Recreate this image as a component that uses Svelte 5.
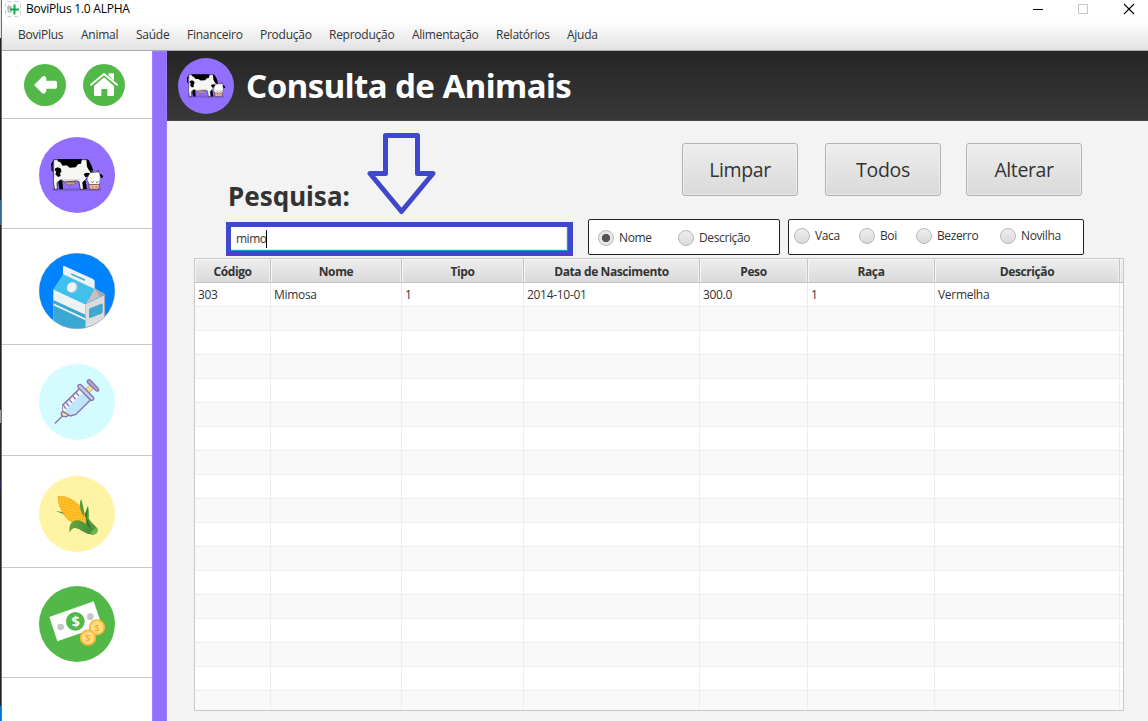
<script>
  const menus = ['BoviPlus', 'Animal', 'Saúde', 'Financeiro', 'Produção', 'Reprodução', 'Alimentação', 'Relatórios', 'Ajuda'];
  const columns = ['Código', 'Nome', 'Tipo', 'Data de Nascimento', 'Peso', 'Raça', 'Descrição', ''];
  const record = ['303', 'Mimosa', '1', '2014-10-01', '300.0', '1', 'Vermelha', ''];
  const rows = [record, ...Array.from({ length: 17 }, () => columns.map(() => ''))];
  let query = $state('mimo');
  let field = $state('Nome');
  let kind = $state('');
</script>

{#snippet cow()}
  <svg viewBox="117 51 228 228">
    <circle cx="231" cy="165" r="114" fill="#926fff" />
    <path d="M156 204H303V213H156z" fill="#7d5fd8" />
    <path d="M174 180L187 178L189 208H178zM246 178L257 182L261 208H250z" fill="#000" />
    <path d="M161 119H262L272 136L276 154L264 168L256 180L248 187L250 208H241L237 185L228 182L194 186L182 179L171 188L172 208H164L160 185L161 160z" fill="#f6f6f4" stroke="#111" stroke-width="2" />
    <path d="M184 178L196 183L230 181L239 176L226 178z" fill="#d5d3cc" />
    <path d="M173 117H246L243 131L234 133L227 142L209 143L200 136L188 137L181 127L173 124zM166 145L174 142L183 146L184 156L180 160L182 168L174 171L166 163L169 155L164 151z" fill="#000" />
    <path d="M161 119L153 132L155 152L159 156L158 138z" fill="#000" />
    <path d="M259 118L266 120L275 137L280 152L274 160L266 149L261 140zM251 162L260 158L272 160L267 168L256 172zM298 160L307 165L310 172L302 175z" fill="#000" />
    <path d="M194 186H227L224 193L220 197L217 193L212 194L210 199L206 193L201 195L198 190z" fill="#c99b87" stroke="#614a40" stroke-width="1.500" />
    <path d="M270 158L298 156L301 173L298 195H269L261 177z" fill="#fffffb" stroke="#555" stroke-width="1.500" />
    <path d="M266 194L299 193L296 208H269z" fill="#f2b59e" stroke="#4d302a" stroke-width="2" />
    <path d="M272 157l4-7 4 7M289 156l6-6 1 7M273 184l4 4 4-4M287 184l4 4 4-4" fill="none" stroke="#4a3a35" stroke-width="2.500" />
    <path d="M277 201h3M287 201h3" stroke="#5b2b28" stroke-width="3" />
  </svg>
{/snippet}

<div class="window">
  <div class="edge"></div>
  <div class="frame">
    <header class="title">
      <svg class="logo" viewBox="0 0 16 16">
        <rect x=".5" y=".5" width="15" height="15" rx="2" fill="#fff" stroke="#ccc" stroke-dasharray="4 3" />
        <path d="M3 5h3v6H3zM2 7h4" fill="#ddd" stroke="#aaa" />
        <path d="M9.500 3.500v10M5 8.500h9" stroke="#16a84b" stroke-width="2" />
      </svg>
      <span>BoviPlus 1.0 ALPHA</span>
      <svg class="controls" viewBox="0 0 120 23">
        <path d="M5 9.500h10" stroke="#000" />
        <rect x="50.500" y="4.500" width="9" height="9" fill="none" stroke="#c8c8c8" />
        <path d="M96 4l10 10M106 4L96 14" stroke="#000" stroke-width="1.1" />
      </svg>
    </header>
    <nav class="menubar">
      {#each menus as menu}<span>{menu}</span>{/each}
    </nav>
    <div class="body">
      <aside>
        <div class="slot nav">
          <svg viewBox="72 192 126 126">
            <circle cx="135" cy="255" r="63" fill="#52b848" />
            <path d="M102 255l25-25q4-4 8-1l3 3q1 2 1 10h27q5 0 5 5v14q0 5-5 5h-27q0 9-2 11l-3 3q-4 3-8-1z" fill="#fff" />
          </svg>
          <svg viewBox="249 192 126 126">
            <circle cx="312" cy="255" r="63" fill="#52b848" />
            <path d="M326 225v-5h16v20zM282 258l30-26 30 26v26q0 4-4 4h-16v-21h-18v21h-17q-5 0-5-4z" fill="#fff" />
            <path d="M274 254l38-33 38 33" fill="none" stroke="#52b848" stroke-width="10" />
            <path d="M273 254l39-32 39 32" fill="none" stroke="#fff" stroke-width="6" stroke-linecap="round" stroke-linejoin="round" />
            <path d="M326 226v-4h16v21z" fill="#fff" />
          </svg>
        </div>
        <div class="slot">{@render cow()}</div>
        <div class="slot">
          <svg viewBox="117 54 228 228">
            <defs><clipPath id="disc"><circle cx="231" cy="168" r="113" /></clipPath></defs>
            <circle cx="231" cy="168" r="113.500" fill="#0083ff" stroke="#687887" stroke-width="1" />
            <g clip-path="url(#disc)">
              <path d="M160 163l96 45v80h-96z" fill="#edf2f4" />
              <path d="M256 208l59-29v70l-59 40z" fill="#dcdcde" />
              <path d="M284 160l31 18-59 30z" fill="#c5c1c3" />
              <path d="M284 160l31 18-15 7z" fill="#aaa5a8" />
              <path d="M189 118l95 43-28 47-96-45z" fill="#40c0eb" />
              <path d="M189 96q0-4 4-3l86 39q5 3 5 8v22l-95-44z" fill="#edf2f4" />
              <path d="M214 115l41 18v5l-41-18z" fill="#42abd0" />
              <path d="M160 195l96 44v11l-96-45zM160 211l96 45v35h-96z" fill="#39a9d3" />
              <path d="M267 226q0-5 4-7l33-13q4-1 4 3v20q0 5-4 7l-33 13q-4 1-4-3z" fill="#42a9cd" />
              <path d="M314 180v80" stroke="#888" stroke-width="2" />
              <ellipse cx="218" cy="157" rx="14" ry="16" fill="#c7d4db" transform="rotate(28 218 157)" />
              <ellipse cx="214" cy="157" rx="13" ry="15" fill="#f1f3f4" transform="rotate(28 214 157)" />
            </g>
          </svg>
        </div>
        <div class="slot">
          <svg viewBox="117 42 228 228">
            <circle cx="231" cy="156" r="114" fill="#d4fcff" />
            <g stroke="#8b72ab" stroke-width="4" stroke-linecap="round" stroke-linejoin="round">
              <path d="M166 219l22-22" />
              <path d="M184 189l9-8 13 13-6 6-11-1-5-5z" fill="#ffdc83" />
              <path d="M239 116l33 33-44 44-17 5-22-13-1-19z" fill="#c0e4fa" />
              <path d="M239 116l11 11-55 57-6-3-1-16z" fill="#edf7ff" stroke="none" />
              <path d="M239 116L188 166" />
              <path d="M258 117l11-12 11 11-12 12z" fill="#ffdc83" stroke="#c5a680" stroke-width="3" />
              <path d="M235 105q5-4 9 0l35 36q5 6 0 9-4 3-8-1l-36-36q-3-4 0-8z" fill="#bcd0eb" />
              <path d="M263 91q4-4 8 0l23 24q4 5 1 7-4 3-8-1l-24-23q-3-3 0-7z" fill="#afaad0" />
              <path d="M229 126l1 5 6 6M219 136l1 5 6 6M209 147l1 5 6 6M200 157l1 5 6 6M192 167l1 4 5 5" fill="none" stroke-width="3.500" />
            </g>
          </svg>
        </div>
        <div class="slot">
          <svg viewBox="117 33 228 228">
            <defs>
              <pattern id="grain" width="8" height="8" patternUnits="userSpaceOnUse" patternTransform="rotate(12)">
                <rect width="8" height="8" fill="#ffc928" /><circle cx="4" cy="4" r="2.600" fill="#f6a11c" />
              </pattern>
              <linearGradient id="leaf"><stop stop-color="#66a641" /><stop offset="1" stop-color="#3f8935" /></linearGradient>
            </defs>
            <circle cx="231" cy="147" r="114" fill="#fff4a4" />
            <path d="M168 139q19-1 31 8t20 23l-11-7q-12-16-40-24z" fill="#4a9139" />
            <path d="M243 103q4 20 8 40l5 36-15-25q-5-29 2-51z" fill="#64a442" />
            <path d="M174 94q20-3 42 10 27 15 39 43l4 30-32-1q-27-7-42-39-12-23-11-43z" fill="url(#grain)" stroke="#eca72d" stroke-width="2" />
            <path d="M243 103q-7 24 2 40l8 14q0-30-10-54z" fill="#559b3d" />
            <path d="M264 122q4 20 2 38 3 6 10 13 8 7 17 18l-2 12-14 7-9-6q-8-9-9-20 1-23-5-36z" fill="#559b3d" />
            <path d="M264 124l-4 34 18 42q-17-9-19-23 2-16-4-27z" fill="#2f7731" />
            <path d="M209 203q-4-25 11-34 16-7 30 3 13 9 20 16l17 8-11 12q-16 0-29-9-9-8-21-10-10-1-17 14z" fill="url(#leaf)" />
            <path d="M271 203l16-15 7 5-3 12-11 5z" fill="#72b64c" />
          </svg>
        </div>
        <div class="slot">
          <svg viewBox="117 33 228 228">
            <circle cx="231" cy="147" r="114" fill="#52b848" />
            <path d="M148 126L281 79L306 152L172 199z" fill="#fff" />
            <circle cx="226" cy="139" r="28" fill="#52b848" />
            <circle cx="182" cy="156" r="10" fill="#c5c5c5" /><circle cx="271" cy="125" r="10" fill="#c5c5c5" />
            <g font-family="Open Sans, sans-serif" text-anchor="middle" font-weight="700">
              <text x="227" y="155" font-size="43" fill="#fff" transform="rotate(-5 227 139)">$</text>
              <circle cx="291" cy="157" r="22" fill="#ffdb83" stroke="#fbb62d" stroke-width="5" />
              <text x="291" y="167" font-size="27" fill="#f3aa27">S</text>
              <circle cx="264" cy="188" r="22" fill="#ffdb83" stroke="#fbb62d" stroke-width="5" />
              <text x="264" y="198" font-size="27" fill="#f3aa27">S</text>
            </g>
          </svg>
        </div>
      </aside>
      <div class="stripe"></div>
      <main>
        <div class="banner">
          {@render cow()}
          <h1>Consulta de Animais</h1>
        </div>
        <div class="tools">
          <div class="search">
            <h2>Pesquisa:</h2>
            <label class="query"><span>{query}</span><i></i></label>
            <svg class="arrow" viewBox="0 0 70 84">
              <path d="M19.500 4.500h32v38h15.500L35.500 80.500 4 42.500h15.500z" fill="none" stroke="#3f48cc" stroke-width="5" stroke-linejoin="round" />
            </svg>
          </div>
          <div class="actions">
            <div class="buttons">
              <button onclick={() => (query = '')}>Limpar</button>
              <button>Todos</button>
              <button>Alterar</button>
            </div>
            <div class="filters">
              <div class="group fields">
                {#each ['Nome', 'Descrição'] as name}
                  <button class="radio" onclick={() => (field = name)}><i class:on={field === name}></i><span>{name}</span></button>
                {/each}
              </div>
              <div class="group kinds">
                {#each ['Vaca', 'Boi', 'Bezerro', 'Novilha'] as name}
                  <button class="radio" onclick={() => (kind = name)}><i class:on={kind === name}></i><span>{name}</span></button>
                {/each}
              </div>
            </div>
          </div>
        </div>
        <div class="table">
          <div class="row head">
            {#each columns as column}<b>{column}</b>{/each}
          </div>
          {#each rows as row}
            <div class="row">{#each row as cell}<span>{cell}</span>{/each}</div>
          {/each}
        </div>
      </main>
    </div>
  </div>
</div>

<style>
  :global(body) { margin: 0; overflow: hidden; }
  * { box-sizing: border-box; }
  svg { display: block; flex: none; }
  .window { display: flex; width: 1148px; height: 721px; font: 12px/16px "Open Sans", "Noto Sans", sans-serif; color: #333; background: #fff; overflow: hidden; }
  .edge { width: 2px; border-right: 1px solid #1883d7; background: linear-gradient(#e4e4e4 0 38px, #222 38px 200px, #376d91 200px 225px, #222 225px 410px, #999 410px 423px, #222 423px 480px, #225 480px 490px, #222 490px 706px, #0078d7 706px); }
  .frame { flex: 1; min-width: 0; display: flex; flex-direction: column; }
  .title { display: flex; height: 23px; padding: 1px 0 0 3px; color: #000; letter-spacing: -.24px; }
  .title span { margin: 0 auto 0 5px; white-space: nowrap; }
  .logo { width: 16px; height: 16px; }
  .controls { width: 120px; height: 23px; margin-top: -1px; }
  .menubar { display: grid; grid-template-columns: 63px 55px 51px 73px 69px 83px 84px 71px 60px; height: 28px; padding: 4px 0 0 16px; border-bottom: 1px solid #aaa; background: linear-gradient(#fdfdfd, #e2e2e2); letter-spacing: -.26px; white-space: nowrap; }
  .body { display: flex; flex: 1; min-height: 0; }
  aside { width: 150px; }
  .slot { display: flex; justify-content: center; align-items: center; height: 112px; border-bottom: 1px solid #c8c8c8; }
  .slot svg { width: 76px; height: 76px; }
  .slot.nav { height: 68px; gap: 17px; padding-right: 5px; }
  .slot.nav svg { width: 42px; height: 42px; }
  .slot:nth-child(2) { height: 110px; padding-top: 2px; }
  .slot:nth-child(3) { height: 116px; padding-top: 8px; }
  .slot:nth-child(4) { height: 111px; padding-top: 4px; }
  .slot:nth-child(5) { padding-top: 4px; }
  .slot:nth-child(6) { height: 110px; padding-top: 2px; }
  .stripe { width: 15px; border: solid #9c7cff; border-width: 1px 1px 0; border-radius: 1px 1px 0 0; background: #926fff; }
  main { flex: 1; min-width: 0; background: #f3f3f3; }
  .banner { display: flex; align-items: center; height: 70px; padding-left: 11px; border-bottom: 1px solid #484848; background: linear-gradient(#252525, #383838); }
  .banner svg { width: 56px; height: 56px; }
  h1 { margin: 0 0 0 12px; font: 700 33px/50px "Noto Sans", sans-serif; letter-spacing: -.53px; color: #fff; white-space: nowrap; }
  .tools { display: flex; height: 137px; padding-left: 59px; }
  .search { position: relative; width: 347px; padding-top: 55px; }
  h2 { margin: 0 0 0 2px; height: 46px; font: 700 26px/40px "Noto Sans", sans-serif; }
  .query { display: flex; align-items: center; height: 34px; border: 5px solid #3f48cc; padding: 0 0 1px 5px; background: #fff; box-shadow: inset -1px -1px #00a2cf, inset -2px -2px #dceff7; letter-spacing: -.5px; }
  .query i { width: 1px; height: 18px; background: #000; }
  .arrow { position: absolute; left: 140px; top: 10px; width: 70px; height: 84px; }
  .actions { margin-left: 15px; width: 496px; padding-top: 22px; }
  .buttons { display: grid; grid-template-columns: 116px 116px 116px; column-gap: 27px; padding-left: 94px; height: 76px; }
  .buttons button:last-child { margin-left: -2px; margin-right: 2px; }
  button { font: inherit; color: inherit; padding: 0; }
  .buttons button { height: 53px; padding-top: 1px; border: 1px solid #b2b2b2; border-radius: 3px; background: linear-gradient(#eee, #d9d9d9); box-shadow: inset 0 0 0 1px #f4f4f499; font-size: 19.500px; letter-spacing: -.4px; }
  .buttons button:nth-child(2) { letter-spacing: -.25px; }
  .filters { display: flex; gap: 8px; }
  .group { display: grid; height: 36px; border: 1px solid #222; border-radius: 2px; background: #fff; align-items: center; }
  .fields { width: 192px; grid-template-columns: 80px 1fr; padding: 1px 0 0 9px; }
  .kinds { width: 296px; grid-template-columns: 65px 57px 84px 1fr; padding: 0 0 2px 5px; }
  .radio { display: flex; align-items: center; gap: 5px; border: 0; background: none; letter-spacing: -.38px; }
  .radio i { flex: none; width: 16px; height: 16px; border: 1px solid #b8b8b8; border-radius: 50%; background: linear-gradient(#eee, #dadada); }
  .radio i.on { background: radial-gradient(circle, #555 0 3.800px, #e6e6e6 4.500px); }
  .table { width: 930px; height: 453px; margin-left: 27px; border: 1px solid #c8c8c8; background: #fff; overflow: hidden; }
  .row { display: grid; grid-template-columns: 76px 131px 122px 176px 108px 127px 185px 3px; height: 24px; }
  .row > * { border-right: 1px solid #ededed; border-bottom: 1px solid #ededed; padding: 4px 0 0 3px; white-space: nowrap; letter-spacing: -.3px; overflow: hidden; }
  .row > :last-child { border-right: 0; padding: 0; }
  .row:nth-child(odd) { background: #f9f9f9; }
  .row.head { background: linear-gradient(#eee, #d9d9d9); }
  .row.head b { padding: 5px 0 0; text-align: center; border-color: #c3c3c3; box-shadow: inset 1px 1px #f6f6f6, inset -1px 0 #f0f0f0; font-weight: 700; letter-spacing: -.4px; }
</style>
